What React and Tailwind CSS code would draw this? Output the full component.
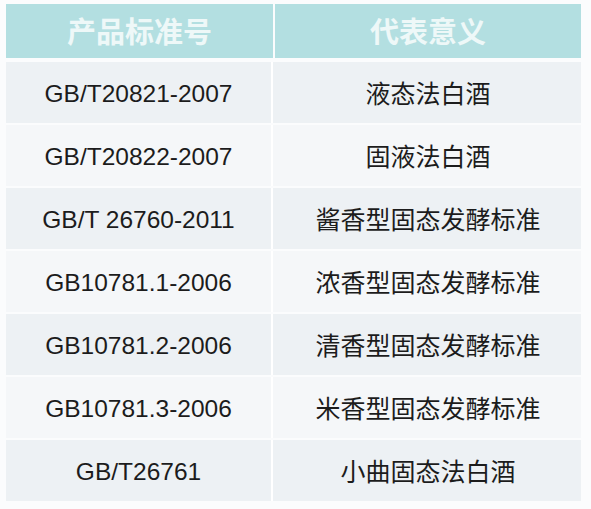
const rows = [
  ["GB/T20821-2007", "液态法白酒"],
  ["GB/T20822-2007", "固液法白酒"],
  ["GB/T 26760-2011", "酱香型固态发酵标准"],
  ["GB10781.1-2006", "浓香型固态发酵标准"],
  ["GB10781.2-2006", "清香型固态发酵标准"],
  ["GB10781.3-2006", "米香型固态发酵标准"],
  ["GB/T26761", "小曲固态法白酒"],
];

export default function App() {
  return (
    <div className="h-[509px] w-[591px] bg-[#fbfcfd] pt-[4px] pl-[6px] pr-[10px] font-['Noto_Sans_CJK_SC',sans-serif]">
      <div className="flex h-[54px] gap-[2px] text-[29px] font-bold text-[#eef8f8]">
        <div className="flex w-[267px] items-center justify-center bg-[#b3dfe1]">产品标准号</div>
        <div className="flex flex-1 items-center justify-center bg-[#b3dfe1]">代表意义</div>
      </div>
      <div className="mt-[4px] flex flex-col gap-[2px] text-[#1c1c1c]">
        {rows.map(([code, name], i) => (
          <div key={code} className={"flex h-[61px] gap-[2px] " + (i % 2 === 0 ? "bg-[#edf1f4]" : "bg-[#f5f7f9]")}>
            <div className="flex w-[267px] items-center justify-center border-r-2 border-white pt-[4px] font-['Liberation_Sans',Arial,sans-serif] text-[24.5px]">
              {code}
            </div>
            <div className="flex flex-1 items-center justify-center text-[25px]">{name}</div>
          </div>
        ))}
      </div>
    </div>
  );
}
